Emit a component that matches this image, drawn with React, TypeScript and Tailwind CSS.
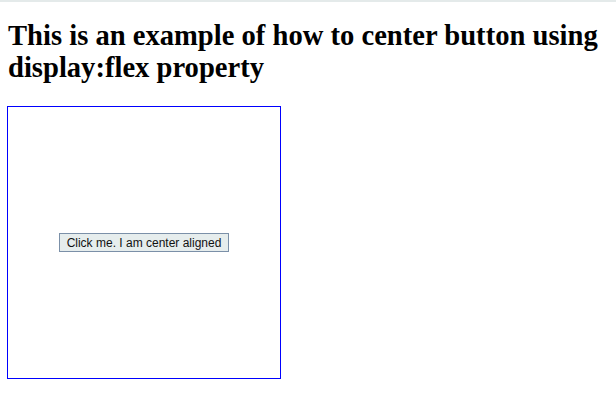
export default function App() {
  return (
    <div className="min-h-[415px] w-full bg-white border-t-2 border-[#e4eaea]">
      <div className="px-[7px]">
        <h1 className="m-0 pt-[17.5px] pl-px text-[28.6px] leading-[32px] font-bold text-black" style={{ fontFamily: '"Liberation Serif", "Times New Roman", serif' }}>
          This is an example of how to center button using display:flex property
        </h1>
        <div className="mt-[22.5px] w-[274px] h-[273px] border border-[#0000ff] flex items-center justify-center">
          <button className="h-[19px] w-[170px] border border-[#7b90a8] bg-[#e6eded] text-[12px] leading-[16px] text-[#111] flex items-center justify-center" style={{ fontFamily: '"Liberation Sans", Arial, sans-serif' }}>
            Click me. I am center aligned
          </button>
        </div>
      </div>
    </div>
  );
}
